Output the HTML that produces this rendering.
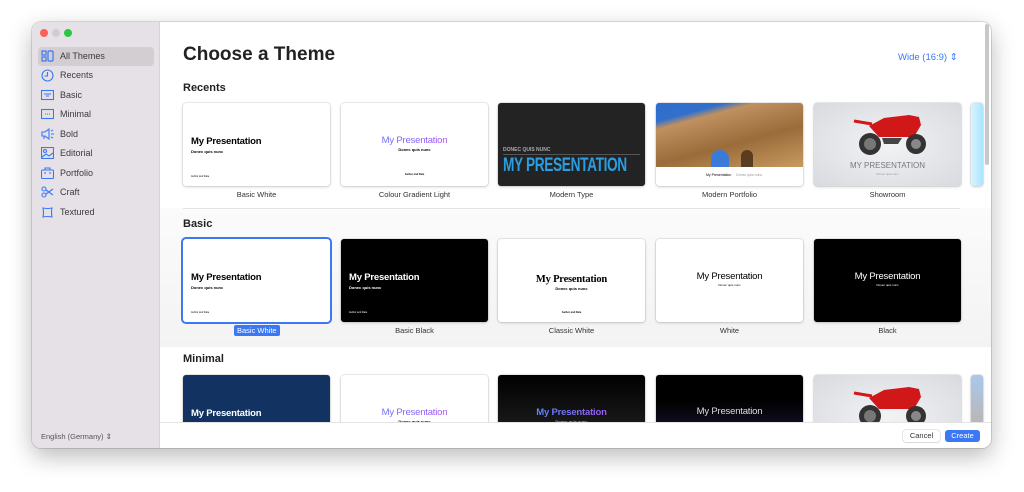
<!DOCTYPE html>
<html><head><meta charset="utf-8"><style>
*{margin:0;padding:0;box-sizing:border-box}
body{width:1024px;height:492px;background:#fff;font-family:"Liberation Sans",sans-serif;position:relative;overflow:hidden}
div{white-space:nowrap}
.win{position:absolute;left:32px;top:22px;width:959px;height:426px;border-radius:9px;overflow:hidden;box-shadow:0 8px 24px rgba(0,0,0,.28),0 0 0 1px rgba(0,0,0,.12);background:#fff}
.side{position:absolute;left:0;top:0;width:128px;height:426px;background:#e6e1e6;border-right:1px solid #d6d2d6}
.dot{position:absolute;top:7px;width:8px;height:8px;border-radius:50%}
.item{position:absolute;left:6px;width:116px;height:19px;font-size:9px;color:#3a3a3a;line-height:19px;padding-left:22px;border-radius:4px}
.item svg{position:absolute;left:3px;top:3px}
.main{position:absolute;left:128px;top:0;right:0;bottom:0}
.abs{position:absolute}
.t{position:absolute;width:147px;height:83px;border-radius:3px;overflow:hidden;box-shadow:0 0 0 .5px rgba(0,0,0,.15),0 1px 3px rgba(0,0,0,.15);background:#fff}
.lbl{position:absolute;width:147px;text-align:center;font-size:7.5px;color:#333}
h2{position:absolute;font-size:11px;font-weight:bold;color:#222}
.mp{position:absolute;font-weight:bold;font-size:9.5px;letter-spacing:-.2px}
.sub{position:absolute;font-size:4px;font-weight:bold}
.ad{position:absolute;font-size:2.5px;left:8px;bottom:8px}
.grad{background:linear-gradient(90deg,#4a7cff,#c040f0);-webkit-background-clip:text;color:transparent}
</style></head><body>
<div class="win">
 <div class="side">
  <div class="dot" style="left:8px;background:#fe5f57"></div>
  <div class="dot" style="left:20px;background:#d0cdd0"></div>
  <div class="dot" style="left:32px;background:#29c840"></div>
  <div class="item" style="top:25px;background:#d2ced2"><svg width="13" height="12" fill="none" stroke="#3b78f5" stroke-width="1.2"><rect x="1" y="1" width="4" height="4"/><rect x="1" y="7" width="4" height="4"/><rect x="7" y="1" width="5" height="10" rx="1"/></svg>All Themes</div>
  <div class="item" style="top:44px"><svg width="13" height="13" fill="none" stroke="#3b78f5" stroke-width="1.1"><circle cx="6.5" cy="6.5" r="5.5"/><path d="M6.5 3v4h-3"/></svg>Recents</div>
  <div class="item" style="top:64px"><svg width="13" height="12" fill="none" stroke="#3b78f5" stroke-width="1.1"><rect x=".5" y="1.5" width="12" height="9"/><path d="M3 5h7M5 7h3"/></svg>Basic</div>
  <div class="item" style="top:83px"><svg width="13" height="12" fill="none" stroke="#3b78f5" stroke-width="1.1"><rect x=".5" y="1.5" width="12" height="9"/><path d="M4 6h1M6 6h1M8 6h1"/></svg>Minimal</div>
  <div class="item" style="top:103px"><svg width="14" height="12" fill="none" stroke="#3b78f5" stroke-width="1.1"><path d="M1 4h3l4-3v10L4 8H1zM3 8v3M10 3l2-1M10 6h3M10 9l2 1"/></svg>Bold</div>
  <div class="item" style="top:122px"><svg width="13" height="12" fill="none" stroke="#3b78f5" stroke-width="1.1"><rect x=".5" y=".5" width="12" height="11"/><circle cx="4" cy="4" r="1.5"/><path d="M1 10l4-3 3 2 4-3"/></svg>Editorial</div>
  <div class="item" style="top:142px"><svg width="13" height="12" fill="none" stroke="#3b78f5" stroke-width="1.1"><rect x=".5" y="3" width="12" height="8.5" rx="1"/><path d="M4 3V1h5v2M4 5v2M9 5v2"/></svg>Portfolio</div>
  <div class="item" style="top:161px"><svg width="13" height="12" fill="none" stroke="#3b78f5" stroke-width="1.1"><circle cx="3" cy="3" r="2"/><circle cx="3" cy="9" r="2"/><path d="M5 4l7 5M5 8l7-5"/></svg>Craft</div>
  <div class="item" style="top:181px"><svg width="13" height="13" fill="none" stroke="#3b78f5" stroke-width="1.1"><path d="M2 2q4.5 1 9 0q-1 4.5 0 9q-4.5-1-9 0q1-4.5 0-9z"/></svg>Textured</div>
  <div class="abs" style="left:9px;top:410px;font-size:7.5px;color:#555">English (Germany) ⇕</div>
 </div>
 <div class="main">
  <div class="abs" style="left:0;top:186px;width:831px;height:139px;background:linear-gradient(#fbfbfb,#f3f3f3)"></div>
  <div class="abs" style="left:23px;top:22px;font-size:19px;font-weight:bold;color:#222">Choose a Theme</div>
  <div class="abs" style="left:738px;top:30px;font-size:9.5px;color:#3b78f5">Wide (16:9) ⇕</div>
  <div class="abs" style="left:825px;top:2px;width:4px;height:141px;background:#c8c8c8;border-radius:2px"></div>
  <h2 style="left:23px;top:60px">Recents</h2>
  <div class="abs" style="left:23px;top:186px;width:777px;height:1px;background:#e2e2e2"></div>
  <h2 style="left:23px;top:196px">Basic</h2>
  <h2 style="left:23px;top:331px">Minimal</h2>

  <div class="t" style="left:23px;top:81px"><div class="mp" style="left:8px;top:33px">My Presentation</div><div class="sub" style="left:8px;top:46px">Donec quis nunc</div><div class="ad">Author and Date</div></div>
  <div class="t" style="left:181px;top:81px"><div class="mp grad" style="left:0;width:147px;text-align:center;top:32px;font-weight:normal">My Presentation</div><div class="sub" style="left:0;width:147px;text-align:center;top:44px">Donec quis nunc</div><div class="sub" style="left:0;width:147px;text-align:center;top:70px;font-size:2.5px">Author and Date</div></div>
  <div class="t" style="left:338px;top:81px;background:#232323"><div class="abs" style="left:5px;top:44px;font-size:5px;color:#aaa;font-weight:bold">DONEC QUIS NUNC</div><div class="abs" style="left:5px;top:51px;width:137px;height:1px;background:#555"></div><div class="abs" style="left:5px;top:53px;font-size:19px;line-height:20px;font-weight:bold;color:#2a9ee0;letter-spacing:-.5px;transform:scaleX(.72);transform-origin:left">MY PRESENTATION</div></div>
  <div class="t" style="left:496px;top:81px;background:#fff"><div class="abs" style="left:0;top:0;width:147px;height:64px;background:linear-gradient(165deg,#2f6dcc 0,#3070cc 18%,#c09060 26%,#9a6c3a 60%,#c89a60 100%)"></div><div class="abs" style="left:55px;top:47px;width:18px;height:17px;border-radius:9px 9px 0 0;background:#3a7ad8"></div><div class="abs" style="left:85px;top:47px;width:12px;height:17px;border-radius:6px 6px 0 0;background:#5a3c20"></div><div class="abs" style="left:50px;top:70px;font-size:3.5px">My Presentation &nbsp;&nbsp;&nbsp; <span style="color:#999">Donec quis nunc</span></div></div>
  <div class="t" style="left:654px;top:81px;background:radial-gradient(#f2f3f5,#d8dadf)">
   <svg class="abs" style="left:30px;top:3px" width="90" height="50"><path d="M25 20l15-8 25-3 10 2 2 8-7 12H35z" fill="#d01818"/><path d="M10 15l18 3" stroke="#d01818" stroke-width="3"/><circle cx="26" cy="38" r="11" fill="#333"/><circle cx="26" cy="38" r="6" fill="#777"/><circle cx="72" cy="38" r="10" fill="#333"/><circle cx="72" cy="38" r="5" fill="#888"/><path d="M38 32h20l-4 6H40z" fill="#444"/></svg>
   <div class="abs" style="left:0;width:147px;text-align:center;top:58px;font-size:8px;color:#777">MY PRESENTATION</div><div class="abs" style="left:0;width:147px;text-align:center;top:69px;font-size:3px;color:#999">Donec quis nunc</div></div>
  <div class="t" style="left:811px;top:81px;width:12px;background:linear-gradient(90deg,#d8f4ff,#a8e6ff)"></div>
  <div class="lbl" style="left:23px;top:168px">Basic White</div>
  <div class="lbl" style="left:181px;top:168px">Colour Gradient Light</div>
  <div class="lbl" style="left:338px;top:168px">Modern Type</div>
  <div class="lbl" style="left:496px;top:168px">Modern Portfolio</div>
  <div class="lbl" style="left:654px;top:168px">Showroom</div>

  <div class="t" style="left:23px;top:217px;box-shadow:0 0 0 2px #3b78f5"><div class="mp" style="left:8px;top:33px">My Presentation</div><div class="sub" style="left:8px;top:46px">Donec quis nunc</div><div class="ad">Author and Date</div></div>
  <div class="t" style="left:181px;top:217px;background:#000;color:#fff"><div class="mp" style="left:8px;top:33px">My Presentation</div><div class="sub" style="left:8px;top:46px">Donec quis nunc</div><div class="ad">Author and Date</div></div>
  <div class="t" style="left:338px;top:217px"><div class="mp" style="left:0;width:147px;text-align:center;top:35px;font-family:'Liberation Serif',serif;font-size:10.5px">My Presentation</div><div class="sub" style="left:0;width:147px;text-align:center;top:47px">Donec quis nunc</div><div class="sub" style="left:0;width:147px;text-align:center;top:72px;font-size:2.5px">Author and Date</div></div>
  <div class="t" style="left:496px;top:217px"><div class="mp" style="left:0;width:147px;text-align:center;top:32px;font-weight:normal">My Presentation</div><div class="sub" style="left:0;width:147px;text-align:center;top:44px;font-weight:normal;font-size:3px">Donec quis nunc</div></div>
  <div class="t" style="left:654px;top:217px;background:#000;color:#fff"><div class="mp" style="left:0;width:147px;text-align:center;top:32px;font-weight:normal">My Presentation</div><div class="sub" style="left:0;width:147px;text-align:center;top:44px;font-weight:normal;font-size:3px">Donec quis nunc</div></div>
  <div class="abs" style="left:74px;top:303px;background:#3b78f5;color:#fff;font-size:7.5px;padding:1px 3px;border-radius:2px">Basic White</div>
  <div class="lbl" style="left:181px;top:304px">Basic Black</div>
  <div class="lbl" style="left:338px;top:304px">Classic White</div>
  <div class="lbl" style="left:496px;top:304px">White</div>
  <div class="lbl" style="left:654px;top:304px">Black</div>

  <div class="t" style="left:23px;top:353px;background:#123262;color:#fff"><div class="mp" style="left:8px;top:33px">My Presentation</div></div>
  <div class="t" style="left:181px;top:353px"><div class="mp grad" style="left:0;width:147px;text-align:center;top:32px;font-weight:normal">My Presentation</div><div class="sub" style="left:0;width:147px;text-align:center;top:44px">Donec quis nunc</div></div>
  <div class="t" style="left:338px;top:353px;background:linear-gradient(#000,#2a2a2a)"><div class="mp grad" style="left:0;width:147px;text-align:center;top:32px;background:linear-gradient(90deg,#3aa0ff,#c040f0);-webkit-background-clip:text">My Presentation</div><div class="sub" style="left:0;width:147px;text-align:center;top:44px;color:#aaa">Donec quis nunc</div></div>
  <div class="t" style="left:496px;top:353px;background:linear-gradient(#000 30%,#23204a)"><div class="mp" style="left:0;width:147px;text-align:center;top:31px;font-weight:normal;color:#ddd">My Presentation</div></div>
  <div class="t" style="left:654px;top:353px;background:radial-gradient(#f2f3f5,#d8dadf)"><svg class="abs" style="left:30px;top:3px" width="90" height="50"><path d="M25 20l15-8 25-3 10 2 2 8-7 12H35z" fill="#d01818"/><path d="M10 15l18 3" stroke="#d01818" stroke-width="3"/><circle cx="26" cy="38" r="11" fill="#333"/><circle cx="26" cy="38" r="6" fill="#777"/><circle cx="72" cy="38" r="10" fill="#333"/><circle cx="72" cy="38" r="5" fill="#888"/></svg></div>
  <div class="t" style="left:811px;top:353px;width:12px;background:linear-gradient(#a8c8ee,#c9a98a)"></div>

  <div class="abs" style="left:0;top:400px;width:831px;height:26px;background:#fff;border-top:1px solid #e4e4e4"></div>
  <div class="abs" style="left:743px;top:408px;width:37px;height:12px;border-radius:3px;box-shadow:0 0 0 .5px #ccc,0 1px 1px rgba(0,0,0,.1);font-size:7.5px;text-align:center;line-height:12px;color:#333;background:#fff">Cancel</div>
  <div class="abs" style="left:785px;top:408px;width:35px;height:12px;border-radius:3px;background:#3b78f5;font-size:7.5px;text-align:center;line-height:12px;color:#fff">Create</div>
 </div>
</div>
</body></html>
